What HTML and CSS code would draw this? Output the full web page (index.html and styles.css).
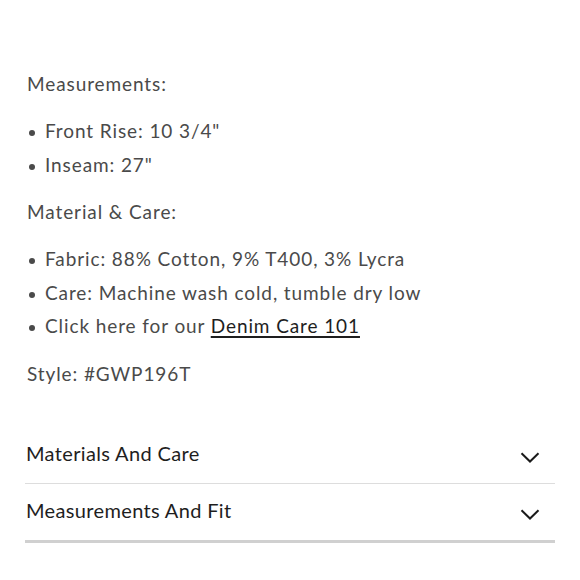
FILE: index.html
```html
<!DOCTYPE html>
<html lang="en">
<head>
<meta charset="utf-8">
<title>Product details</title>
<link rel="stylesheet" href="styles.css">
</head>
<body>
<main class="page">
  <section class="desc">
    <p class="label">Measurements:</p>
    <ul class="bullets">
      <li>Front Rise: 10 3/4"</li>
      <li>Inseam: 27"</li>
    </ul>
    <p class="label">Material &amp; Care:</p>
    <ul class="bullets">
      <li>Fabric: 88% Cotton, 9% T400, 3% Lycra</li>
      <li>Care: Machine wash cold, tumble dry low</li>
      <li>Click here for our <a class="link" href="#">Denim Care 101</a></li>
    </ul>
    <p class="label">Style: #GWP196T</p>
  </section>
  <section class="accordion">
    <div class="acc-row">
      <span class="acc-title">Materials And Care</span>
      <svg class="chev" width="20" height="11" viewBox="0 0 20 11"><path d="M1.5 1.2 L10 9.5 L18.5 1.2" fill="none" stroke="#1a1a1a" stroke-width="2"/></svg>
    </div>
    <div class="acc-row last">
      <span class="acc-title">Measurements And Fit</span>
      <svg class="chev" width="20" height="11" viewBox="0 0 20 11"><path d="M1.5 1.2 L10 9.5 L18.5 1.2" fill="none" stroke="#1a1a1a" stroke-width="2"/></svg>
    </div>
  </section>
</main>
</body>
</html>
```
FILE: styles.css
```css
html, body {
  margin: 0;
  padding: 0;
  background: #fff;
}
body {
  font-family: Lato, "Liberation Sans", sans-serif;
  color: #4a4a4a;
}
.page {
  padding-top: 67px;
}
.desc {
  padding-left: 27px;
  font-size: 19px;
  line-height: 34px;
  letter-spacing: 0.9px;
}
.label {
  margin: 0;
}
.bullets {
  list-style: none;
  margin: 13px 0 14px;
  padding: 0;
}
.bullets li {
  line-height: 33.5px;
}
.bullets li::before {
  content: "";
  display: inline-block;
  width: 6px;
  height: 6px;
  border-radius: 50%;
  background: #4a4a4a;
  vertical-align: middle;
  margin-left: 2px;
  margin-right: 10px;
}
.link {
  color: #1e1e1e;
  text-decoration: underline;
  text-underline-offset: 3px;
  text-decoration-thickness: 1.5px;
}
.accordion {
  margin: 36px 25px 0 25px;
}
.acc-row {
  display: flex;
  justify-content: space-between;
  align-items: center;
  height: 56px;
  border-bottom: 1px solid #ddd;
  padding-right: 15px;
  box-sizing: content-box;
}
.acc-row.last {
  border-bottom: 3px solid #d0d0d0;
}
.acc-title {
  font-size: 20px;
  letter-spacing: 0.35px;
  color: #1e1e1e;
  padding-left: 1px;
  margin-top: -3px;
}
.chev {
  display: block;
  margin-top: 6px;
}
```
